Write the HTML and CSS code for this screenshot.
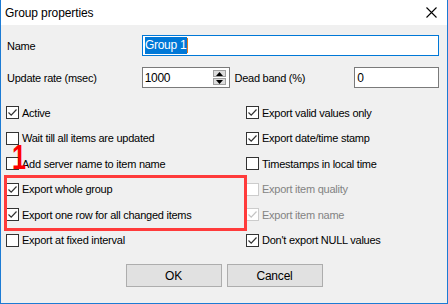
FILE: index.html
```
<!DOCTYPE html>
<html lang="en">
<head>
    <meta charset="UTF-8">
    <title>Group properties</title>
    <link rel="stylesheet" href="styles.css">
</head>
<body>
    <div class="window">
        <div class="titlebar">
            <span class="title">Group properties</span>
            <svg class="close" width="11" height="11" viewBox="0 0 11 11">
                <path d="M0.5 0.5 L10.5 10.5 M10.5 0.5 L0.5 10.5" stroke="#000" stroke-width="1.1" fill="none"/>
            </svg>
        </div>
        <div class="dialog">
            <div class="field-row first">
                <label class="lbl">Name</label>
                <div class="edit focused"><span class="sel">Group 1</span><span class="caret"></span></div>
            </div>
            <div class="field-row">
                <label class="lbl">Update rate (msec)</label>
                <div class="edit rate">
                    <span class="val">1000</span>
                    <div class="spin">
                        <span class="spin-btn"><svg width="7" height="4" viewBox="0 0 7 4"><path d="M3.5 0 L7 4 L0 4 Z" fill="#000"/></svg></span>
                        <span class="spin-btn"><svg width="7" height="4" viewBox="0 0 7 4"><path d="M0 0 L7 0 L3.5 4 Z" fill="#000"/></svg></span>
                    </div>
                </div>
                <label class="lbl2">Dead band (%)</label>
                <div class="edit band">0</div>
            </div>

            <div class="checks">
                <div class="chk"><span class="box"><svg viewBox="0 0 11 11"><path d="M1.5 5.5 L4.2 8.2 L9.5 2.5" /></svg></span>Active</div>
                <div class="chk"><span class="box"><svg viewBox="0 0 11 11"><path d="M1.5 5.5 L4.2 8.2 L9.5 2.5" /></svg></span>Export valid values only</div>

                <div class="chk"><span class="box"></span>Wait till all items are updated</div>
                <div class="chk"><span class="box"><svg viewBox="0 0 11 11"><path d="M1.5 5.5 L4.2 8.2 L9.5 2.5" /></svg></span>Export date/time stamp</div>

                <div class="chk"><span class="box"></span>Add server name to item name</div>
                <div class="chk"><span class="box"></span>Timestamps in local time</div>

                <div class="chk"><span class="box"><svg viewBox="0 0 11 11"><path d="M1.5 5.5 L4.2 8.2 L9.5 2.5" /></svg></span>Export whole group</div>
                <div class="chk disabled"><span class="box"></span>Export item quality</div>

                <div class="chk"><span class="box"><svg viewBox="0 0 11 11"><path d="M1.5 5.5 L4.2 8.2 L9.5 2.5" /></svg></span>Export one row for all changed items</div>
                <div class="chk disabled"><span class="box"><svg viewBox="0 0 11 11"><path d="M1.5 5.5 L4.2 8.2 L9.5 2.5" /></svg></span>Export item name</div>

                <div class="chk"><span class="box"></span>Export at fixed interval</div>
                <div class="chk"><span class="box"><svg viewBox="0 0 11 11"><path d="M1.5 5.5 L4.2 8.2 L9.5 2.5" /></svg></span>Don't export NULL values</div>
            </div>

            <div class="buttons">
                <button class="btn">OK</button>
                <button class="btn">Cancel</button>
            </div>

            <!-- annotation overlay -->
            <div class="mark-box"></div>
            <div class="mark-num">1</div>
        </div>
    </div>
</body>
</html>
```

FILE: styles.css
```
body {
    margin: 0;
    font-family: "Liberation Sans", Arial, sans-serif;
    font-size: 11px;
    letter-spacing: -0.25px;
    color: #000;
}

.window {
    width: 448px;
    height: 304px;
    box-sizing: border-box;
    border: 1px solid #1c7bd4;
    border-top: none;
    background-color: #f0f0f0;
    display: flex;
    flex-direction: column;
}

.titlebar {
    height: 25px;
    background-color: #fff;
    display: flex;
    align-items: center;
    justify-content: space-between;
    padding: 0 10px 0 4px;
    font-size: 12px;
    letter-spacing: -0.1px;
}

.title {
    margin-top: 1px;
}

.close {
    display: block;
}

.dialog {
    position: relative;
    flex: 1;
    padding: 0 8px 0 6px;
}

.field-row {
    display: flex;
    align-items: center;
    height: 21px;
    margin-top: 11px;
}

.field-row.first {
    margin-top: 10px;
}

.lbl {
    width: 135px;
}

.lbl2 {
    width: 120px;
    padding-left: 4px;
}

.edit {
    height: 21px;
    box-sizing: border-box;
    border: 1px solid #7a7a7a;
    background-color: #fff;
    display: flex;
    align-items: center;
    padding-left: 2px;
    font-size: 12px;
    letter-spacing: -0.3px;
}

.edit.focused {
    flex: 1;
    border-color: #0078d7;
}

.sel {
    background-color: #0078d7;
    color: #fff;
    padding: 1px 1px 1px 0;
    line-height: 15px;
}

.caret {
    width: 1px;
    height: 15px;
    background-color: #e07a20;
}

.edit.rate {
    width: 89px;
    justify-content: space-between;
    padding-right: 3px;
}

.edit.band {
    width: 85px;
}

.spin {
    display: flex;
    flex-direction: column;
    gap: 1px;
}

.spin-btn {
    width: 13px;
    height: 7px;
    box-sizing: border-box;
    background-color: #dcdcdc;
    border: 1px solid #a0a0a0;
    display: flex;
    align-items: center;
    justify-content: center;
}

.spin-btn svg {
    display: block;
}

.checks {
    display: grid;
    grid-template-columns: 240px 1fr;
    grid-auto-rows: 25.5px;
    margin: 12px 0 0 -1px;
}

.chk {
    display: flex;
    align-items: center;
    white-space: nowrap;
}

.box {
    width: 13px;
    height: 13px;
    box-sizing: border-box;
    border: 1px solid #333;
    background-color: #fff;
    margin-right: 3px;
    display: flex;
    align-items: center;
    justify-content: center;
    flex-shrink: 0;
}

.box svg {
    width: 11px;
    height: 11px;
    fill: none;
    stroke: #333;
    stroke-width: 1.2;
}

.chk.disabled {
    color: #838383;
}

.chk.disabled .box {
    border-color: #cccccc;
}

.chk.disabled .box svg {
    stroke: #c4c4c4;
}

.buttons {
    display: flex;
    justify-content: center;
    gap: 5px;
    margin-top: 11px;
    padding-left: 2px;
}

.btn {
    width: 96px;
    height: 23px;
    background-color: #e1e1e1;
    border: 1px solid #adadad;
    font-family: "Liberation Sans", Arial, sans-serif;
    font-size: 12px;
    letter-spacing: -0.2px;
    color: #000;
    padding: 0;
}

.mark-box {
    position: absolute;
    left: 3px;
    top: 150px;
    width: 243px;
    height: 56px;
    box-sizing: border-box;
    border: 3px solid #ff3b3b;
}

.mark-num {
    position: absolute;
    left: 11px;
    top: 114px;
    color: #f00;
    font-weight: bold;
    font-size: 35px;
    line-height: 35px;
    letter-spacing: 0;
    transform: scaleX(0.72);
    transform-origin: left top;
}
```
